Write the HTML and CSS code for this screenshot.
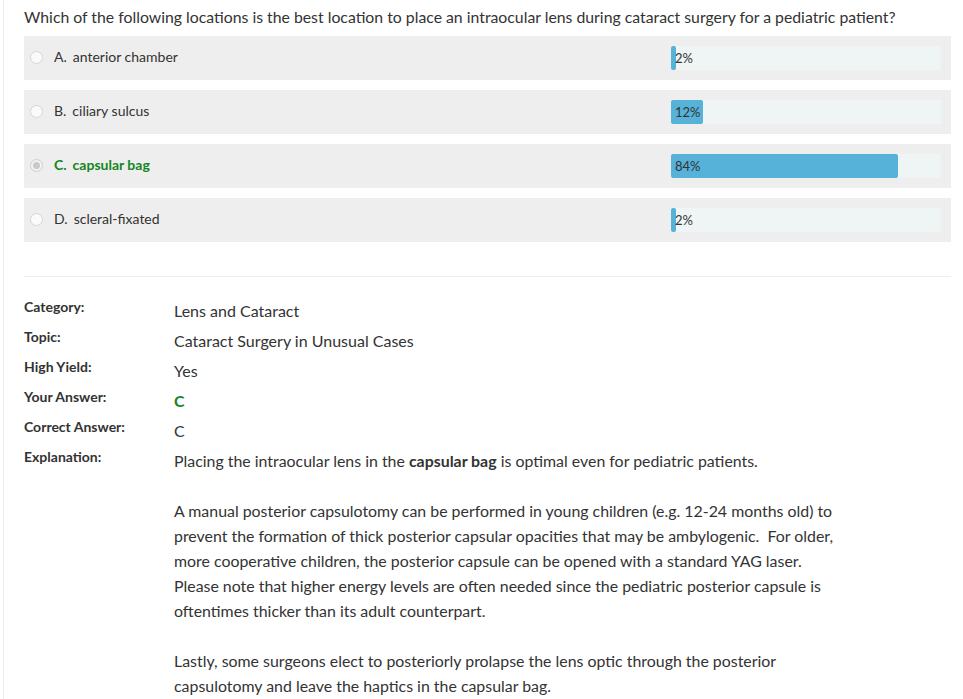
FILE: index.html
```html
<!DOCTYPE html>
<html>
<head>
<meta charset="utf-8">
<link rel="stylesheet" href="styles.css">
</head>
<body>
<div class="page">
  <div class="question">Which of the following locations is the best location to place an intraocular lens during cataract surgery for a pediatric patient?</div>
  <div class="options">
    <div class="option">
      <span class="radio"></span>
      <span class="opt-text"><span class="letter">A.</span>anterior chamber</span>
      <div class="track"><div class="bar" style="width:2%"></div><span class="pct">2%</span></div>
    </div>
    <div class="option">
      <span class="radio"></span>
      <span class="opt-text"><span class="letter">B.</span>ciliary sulcus</span>
      <div class="track"><div class="bar" style="width:12%"></div><span class="pct">12%</span></div>
    </div>
    <div class="option">
      <span class="radio checked"></span>
      <span class="opt-text correct"><span class="letter">C.</span>capsular bag</span>
      <div class="track"><div class="bar" style="width:84%"></div><span class="pct">84%</span></div>
    </div>
    <div class="option">
      <span class="radio"></span>
      <span class="opt-text"><span class="letter">D.</span>scleral-fixated</span>
      <div class="track"><div class="bar" style="width:2%"></div><span class="pct">2%</span></div>
    </div>
  </div>
  <hr class="sep">
  <div class="details">
    <div class="label">Category:</div>
    <div class="value">Lens and Cataract</div>
    <div class="label">Topic:</div>
    <div class="value">Cataract Surgery in Unusual Cases</div>
    <div class="label">High Yield:</div>
    <div class="value">Yes</div>
    <div class="label">Your Answer:</div>
    <div class="value green">C</div>
    <div class="label">Correct Answer:</div>
    <div class="value">C</div>
    <div class="label">Explanation:</div>
    <div class="value explanation">
      <p>Placing the intraocular lens in the <b>capsular bag</b> is optimal even for pediatric patients.</p>
      <p>A manual posterior capsulotomy can be performed in young children (e.g. 12-24 months old) to prevent the formation of thick posterior capsular opacities that may be ambylogenic.&nbsp; For older, more cooperative children, the posterior capsule can be opened with a standard YAG laser.&nbsp; Please note that higher energy levels are often needed since the pediatric posterior capsule is oftentimes thicker than its adult counterpart.</p>
      <p>Lastly, some surgeons elect to posteriorly prolapse the lens optic through the posterior capsulotomy and leave the haptics in the capsular bag.</p>
    </div>
  </div>
</div>
</body>
</html>
```

FILE: styles.css
```css
html, body {
  margin: 0;
  padding: 0;
  background: #fff;
}
body {
  font-family: Lato, "Open Sans", sans-serif;
  color: #333;
}
.page {
  margin-left: 3px;
  border-left: 1px solid #ebebeb;
  padding: 6px 12px 0 20px;
  min-height: 699px;
  box-sizing: border-box;
}
.question {
  font-size: 15.8px;
  line-height: 22px;
  margin-bottom: 8px;
}
.options {
  display: flex;
  flex-direction: column;
  gap: 10px;
}
.option {
  display: flex;
  align-items: center;
  height: 44px;
  background: #eeeeee;
  padding: 0 10px 0 6px;
  box-sizing: border-box;
}
.radio {
  width: 11px;
  height: 11px;
  border-radius: 50%;
  border: 1px solid #d6d6d6;
  background: #fafafa;
  box-sizing: content-box;
  flex: none;
  display: flex;
  align-items: center;
  justify-content: center;
  margin-top: -2px;
}
.radio.checked {
  border-color: #cfcfcf;
  background: #f2f2f2;
}
.radio.checked::after {
  content: "";
  width: 7px;
  height: 7px;
  border-radius: 50%;
  background: #c9c9c9;
}
.opt-text {
  flex: 1;
  margin-left: 11px;
  font-size: 14px;
  margin-top: -3px;
}
.letter {
  margin-right: 6px;
}
.opt-text.correct {
  color: #13861f;
  font-weight: bold;
}
.track {
  position: relative;
  width: 270px;
  height: 24px;
  background: #eff4f4;
  flex: none;
}
.bar {
  height: 100%;
  background: #56b2d8;
  border-radius: 2px;
  min-width: 5px;
}
.pct {
  position: absolute;
  left: 4px;
  top: 0;
  line-height: 24px;
  font-size: 13px;
  color: #333;
}
.sep {
  border: 0;
  border-top: 1px solid #eeeeee;
  margin: 34px 0 20px;
}
.details {
  display: grid;
  grid-template-columns: 150px 1fr;
}
.label {
  font-weight: bold;
  font-size: 14px;
  line-height: 20px;
  padding-bottom: 10px;
}
.value {
  font-size: 16px;
  line-height: 22px;
  padding: 3px 0 5px;
}
.value.green {
  color: #13861f;
  font-weight: bold;
}
.explanation {
  font-size: 15.9px;
  padding-top: 1px;
  line-height: 25px;
  max-width: 670px;
}
.explanation p {
  margin: 0 0 25px;
}
```
